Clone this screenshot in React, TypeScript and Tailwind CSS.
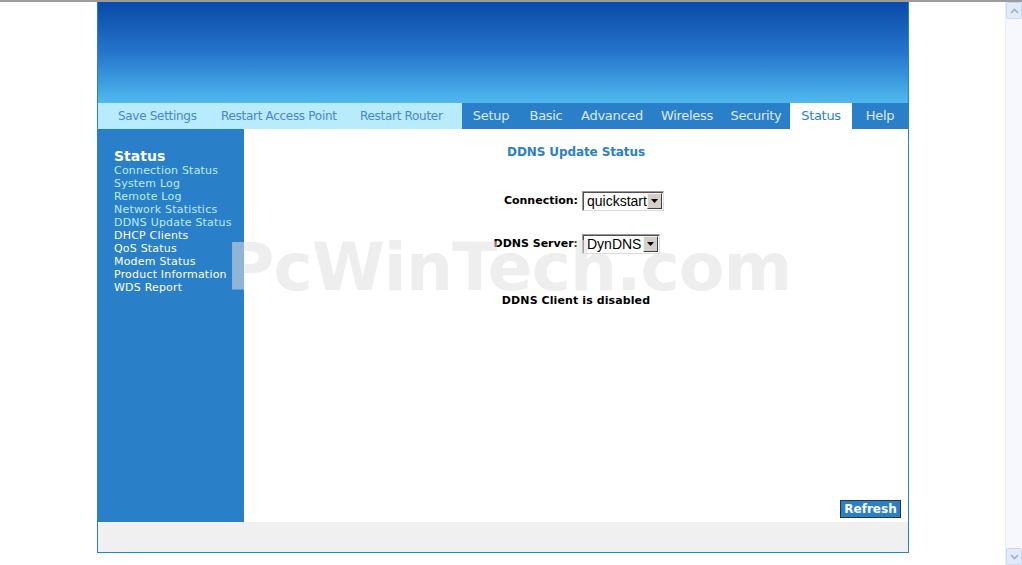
import React from "react";

const navLeft = [
  { label: "Save Settings", w: "w-[103px]" },
  { label: "Restart Access Point", w: "w-[139px]" },
  { label: "Restart Router", w: "w-[100px]" },
];

const tabs = [
  { label: "Setup", w: "w-[58px]" },
  { label: "Basic", w: "w-[52px]" },
  { label: "Advanced", w: "w-[80px]" },
  { label: "Wireless", w: "w-[70px]" },
  { label: "Security", w: "w-[68px]" },
  { label: "Status", w: "w-[62px]", active: true },
  { label: "Help", w: "flex-1" },
];

const sideLinks = [
  { label: "Connection Status", visited: true },
  { label: "System Log", visited: true },
  { label: "Remote Log", visited: true },
  { label: "Network Statistics", visited: true },
  { label: "DDNS Update Status", visited: true },
  { label: "DHCP Clients" },
  { label: "QoS Status" },
  { label: "Modem Status" },
  { label: "Product Information" },
  { label: "WDS Report" },
];

function FakeSelect({ value, width }: { value: string; width: string }) {
  return (
    <div
      className={`flex h-[20px] items-stretch border border-t-[#9a9a9a] border-l-[#9a9a9a] border-r-[#dcdcdc] border-b-[#dcdcdc] bg-white shadow-[inset_1px_1px_0_#505050] ${width}`}
    >
      <span className="flex flex-1 items-center pl-[4px] font-['Liberation_Sans',Arial,sans-serif] text-[14px] font-normal leading-none text-black">
        {value}
      </span>
      <span className="my-[1px] mr-[1px] flex w-[15px] items-center justify-center border border-t-[#f4f4f4] border-l-[#f4f4f4] border-r-[#404040] border-b-[#404040] bg-[#d4d0c8]">
        <svg width="7" height="4" viewBox="0 0 7 4">
          <path d="M0 0h7L3.5 4z" fill="#000" />
        </svg>
      </span>
    </div>
  );
}

export default function App() {
  return (
    <div className="flex h-[565px] w-[1022px] flex-col overflow-hidden bg-white font-['DejaVu_Sans',Verdana,sans-serif]">
      <div className="h-[2px] bg-[#9c9c9c]" />
      <div className="flex flex-1">
        <div className="flex-1">
          <div className="ml-[97px] w-[812px] border-x border-b border-[#2a7fc9]">
            <div className="h-[101px] bg-gradient-to-b from-[#0a4aa8] via-[#2575cc] to-[#50b9ee]" />
            <div className="flex h-[26px] text-[12px] leading-[26px]">
              <div className="flex w-[364px] bg-[#b8ecfd] pl-[20px] text-[#4a86c8]">
                {navLeft.map((n) => (
                  <span key={n.label} className={`${n.w} whitespace-nowrap tracking-[-0.3px]`}>
                    {n.label}
                  </span>
                ))}
              </div>
              <div className="flex flex-1 bg-[#2a7fc9]">
                {tabs.map((t) => (
                  <span
                    key={t.label}
                    className={`${t.w} whitespace-nowrap text-center text-[13px] tracking-[-0.3px] ${
                      t.active ? "bg-white text-[#2a7fc9]" : "text-[#dcecfa]"
                    }`}
                  >
                    {t.label}
                  </span>
                ))}
              </div>
            </div>
            <div className="relative flex h-[393px]">
              <div className="w-[146px] bg-[#2a7fc9] pl-[16px] pt-[19px]">
                <div className="text-[14px] font-bold leading-[16px] text-white">Status</div>
                <ul className="text-[11px] leading-[13px] tracking-[0.2px]">
                  {sideLinks.map((l) => (
                    <li key={l.label} className={l.visited ? "text-[#b8ecfd]" : "text-white"}>
                      {l.label}
                    </li>
                  ))}
                </ul>
              </div>
              <div className="flex flex-1 flex-col items-center pt-[15px]">
                <h1 className="text-[12px] font-bold leading-[16px] tracking-[-0.1px] text-[#2a7fc9]">
                  DDNS Update Status
                </h1>
                <div className="ml-[8px] mt-[31px] grid grid-cols-[1fr_1fr] items-center gap-x-[4px] gap-y-[23px] text-[11px] font-bold text-black">
                  <span className="justify-self-end">Connection:</span>
                  <FakeSelect value="quickstart" width="w-[82px]" />
                  <span className="justify-self-end">DDNS Server:</span>
                  <FakeSelect value="DynDNS" width="w-[78px]" />
                </div>
                <p className="mt-[39px] text-[11px] font-bold tracking-[0.1px] text-black">DDNS Client is disabled</p>
                <div className="mt-auto mb-[2px] self-end pr-[7px]">
                  <button className="h-[18px] w-[61px] border border-[#333] bg-[#2a7fc9] text-[12px] font-bold leading-none text-white">
                    Refresh
                  </button>
                </div>
              </div>
              <div className="pointer-events-none absolute left-[128px] top-[106px] select-none text-[66px] font-bold leading-none tracking-[-0.75px] text-[rgba(224,224,224,0.55)]">
                PcWinTech.com
              </div>
            </div>
            <div className="h-[30px] bg-[#f0f0f0]" />
          </div>
        </div>
        <div className="flex w-[17px] flex-col justify-between border-l border-[#e8eef8] bg-[#f6f8fd]">
          <div className="flex h-[17px] items-center justify-center rounded-[2px] border border-[#c8d8f4] bg-[#e3ebfb]">
            <svg width="9" height="6" viewBox="0 0 9 6">
              <path d="M1 5l3.5-3.5L8 5" stroke="#9aaed4" strokeWidth="1.6" fill="none" />
            </svg>
          </div>
          <div className="flex h-[17px] items-center justify-center rounded-[2px] border border-[#c8d8f4] bg-[#e3ebfb]">
            <svg width="9" height="6" viewBox="0 0 9 6">
              <path d="M1 1l3.5 3.5L8 1" stroke="#9aaed4" strokeWidth="1.6" fill="none" />
            </svg>
          </div>
        </div>
      </div>
    </div>
  );
}
